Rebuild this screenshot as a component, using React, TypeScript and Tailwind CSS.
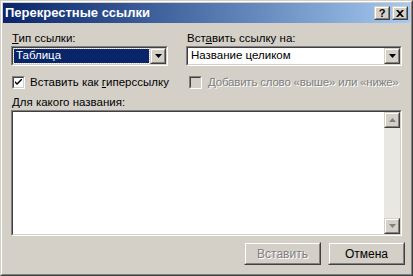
import type { ReactNode } from "react";

const font = { fontFamily: '"Liberation Sans", Arial, sans-serif' };

function Sunken({ children, className = "" }: { children?: ReactNode; className?: string }) {
  return (
    <div className={`border border-t-[#808080] border-l-[#808080] border-r-white border-b-white ${className}`}>
      <div className="h-full w-full border border-t-[#404040] border-l-[#404040] border-r-[#d4d0c8] border-b-[#d4d0c8] flex">
        {children}
      </div>
    </div>
  );
}

function Raised({ children, className = "" }: { children?: ReactNode; className?: string }) {
  return (
    <div className={`border border-t-[#d4d0c8] border-l-[#d4d0c8] border-r-[#404040] border-b-[#404040] bg-[#d4d0c8] ${className}`}>
      <div className="h-full w-full border border-t-white border-l-white border-r-[#808080] border-b-[#808080] flex items-center justify-center">
        {children}
      </div>
    </div>
  );
}

function Arrow({ up = false, disabled = false }: { up?: boolean; disabled?: boolean }) {
  const d = up ? "M3.5 0 L7 4 L0 4 Z" : "M0 0 L7 0 L3.5 4 Z";
  return (
    <svg width="7" height="4" viewBox="0 0 7 4">
      <path d={d} fill={disabled ? "#808080" : "#000"} />
    </svg>
  );
}

function Combo({ value, selected = false }: { value: string; selected?: boolean }) {
  return (
    <Sunken className="h-[20px] w-full">
      <div className="flex-1 bg-white flex items-center pl-[1px] pr-[1px]">
        <div
          className={`h-[14px] flex-1 flex items-center pl-[2px] ${
            selected ? "bg-[#0a246a] text-white outline outline-1 outline-dotted outline-[#d4d0c8]" : "text-black"
          }`}
        >
          {value}
        </div>
      </div>
      <Raised className="w-[16px] h-full">
        <Arrow />
      </Raised>
    </Sunken>
  );
}

function Check({ checked = false, disabled = false }: { checked?: boolean; disabled?: boolean }) {
  return (
    <Sunken className="w-[13px] h-[13px] shrink-0">
      <div className={`flex-1 flex items-center justify-center ${disabled ? "bg-[#d4d0c8]" : "bg-white"}`}>
        {checked && (
          <svg width="7" height="7" viewBox="0 0 7 7">
            <path d="M0 2 L0 4 L2 6 L7 1 L7 -1 L2 4 Z" fill="#000" />
          </svg>
        )}
      </div>
    </Sunken>
  );
}

export default function App() {
  return (
    <div
      className="w-[413px] h-[276px] bg-[#d4d0c8] border border-t-[#d4d0c8] border-l-[#d4d0c8] border-r-[#404040] border-b-[#404040]"
      style={font}
    >
      <div className="h-full border border-t-white border-l-white border-r-[#808080] border-b-[#808080] p-[1px] flex flex-col">
        {/* title bar */}
        <div className="h-[20px] flex items-center bg-gradient-to-r from-[#0a246a] to-[#a6caf0] pl-[2px] pr-[2px]">
          <span className="flex-1 text-white font-bold text-[13px]">Перекрестные ссылки</span>
          <Raised className="w-[16px] h-[14px] mr-[2px]">
            <span className="text-[11px] font-bold leading-none text-black">?</span>
          </Raised>
          <Raised className="w-[16px] h-[14px]">
            <svg width="8" height="7" viewBox="0 0 8 7">
              <path d="M0 0 L2 0 L4 2 L6 0 L8 0 L5 3.5 L8 7 L6 7 L4 5 L2 7 L0 7 L3 3.5 Z" fill="#000" />
            </svg>
          </Raised>
        </div>

        <div className="flex-1 flex flex-col px-[8px] text-[11.5px] text-black">
          <div className="flex gap-[18px] mt-[8px]">
            <div className="w-[157px] flex flex-col">
              <div className="leading-[14px] pl-[1px] h-[15px]">
                <span className="underline">Т</span>ип ссылки:
              </div>
              <Combo value="Таблица" selected />
            </div>
            <div className="flex-1 flex flex-col">
              <div className="leading-[14px] pl-[1px] h-[15px]">
                Вст<span className="underline">а</span>вить ссылку на:
              </div>
              <Combo value="Название целиком" />
            </div>
          </div>

          <div className="flex gap-[18px] mt-[10px] h-[13px]">
            <div className="w-[157px] flex items-center gap-[5px] pl-[1px]">
              <Check checked />
              <span className="leading-[13px] whitespace-nowrap">
                Вставить как <span className="underline">г</span>иперссылку
              </span>
            </div>
            <div className="flex-1 flex items-center gap-[6px] pl-[3px]">
              <Check disabled />
              <span className="leading-[13px] text-[#808080] tracking-[-0.2px] [text-shadow:1px_1px_0_#fff] whitespace-nowrap">
                Добавить слово «выше» или «ниже»
              </span>
            </div>
          </div>

          <div className="leading-[14px] mt-[6px] pl-[1px]">
            <span className="underline">Д</span>ля какого названия:
          </div>

          <Sunken className="h-[126px] mt-[1px]">
            <div className="flex-1 bg-white" />
            <div className="w-[16px] flex flex-col bg-[#e9e7e2]">
              <Raised className="h-[16px]">
                <Arrow up disabled />
              </Raised>
              <div className="flex-1" />
              <Raised className="h-[16px]">
                <Arrow disabled />
              </Raised>
            </div>
          </Sunken>

          <div className="flex justify-end gap-[7px] mt-[6px] mr-[-3px] text-[12px]">
            <Raised className="w-[77px] h-[23px]">
              <span className="text-[#808080] [text-shadow:1px_1px_0_#fff]">Вставить</span>
            </Raised>
            <Raised className="w-[77px] h-[23px]">
              <span>Отмена</span>
            </Raised>
          </div>
        </div>
      </div>
    </div>
  );
}
